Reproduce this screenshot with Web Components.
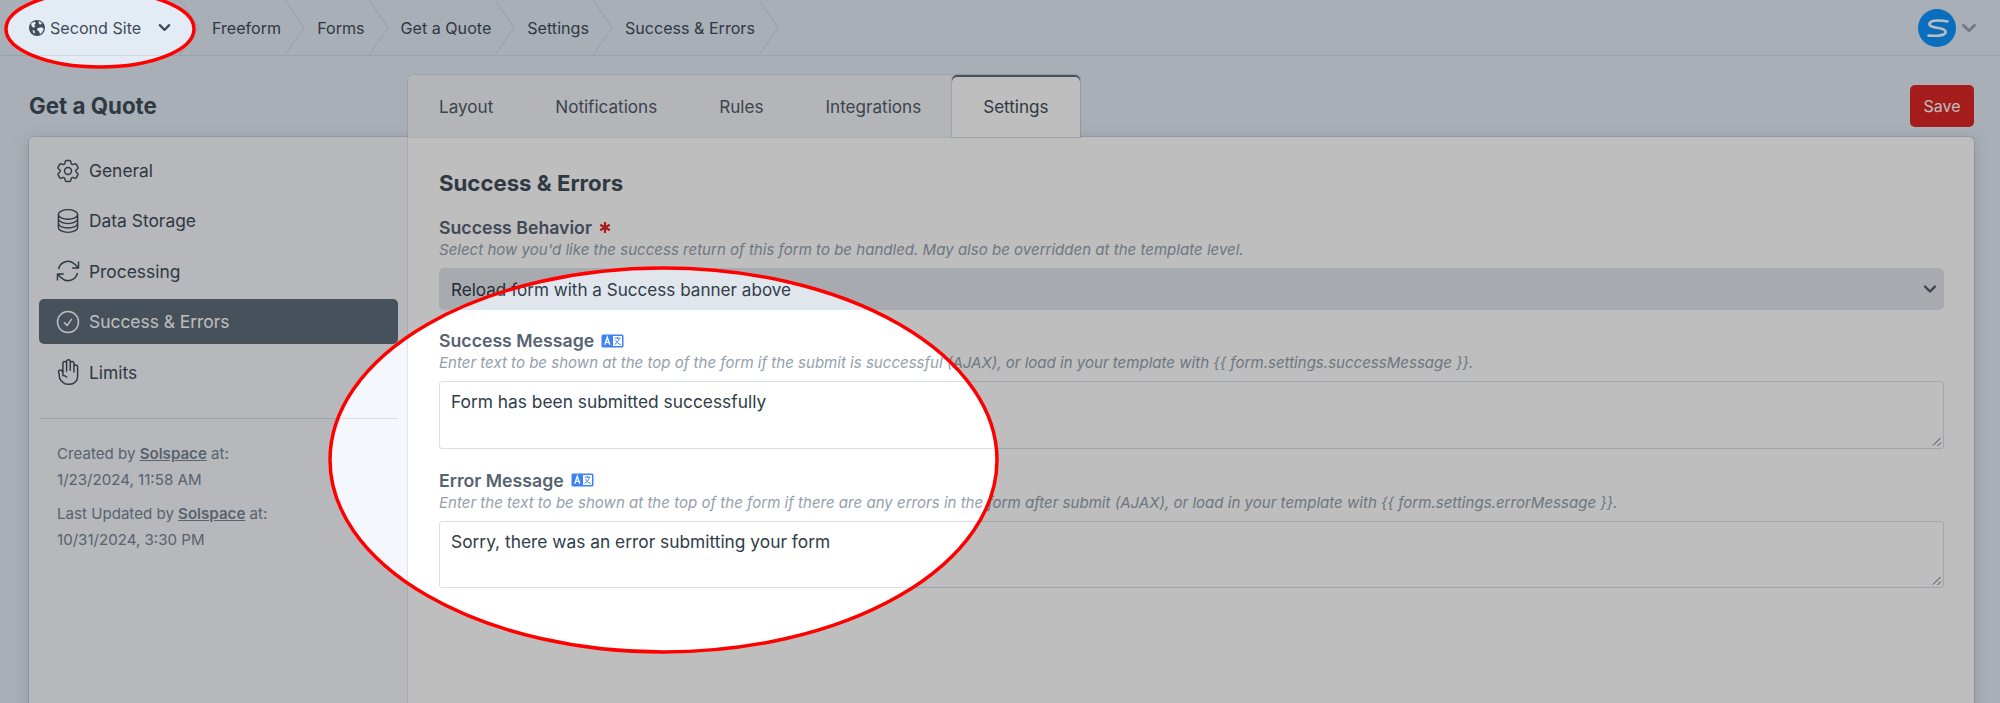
<!DOCTYPE html>
<html lang="en">
<head>
<meta charset="utf-8">
<title>Get a Quote</title>
<style>
  html, body {
    margin: 0;
    height: 703px;
    overflow: hidden;
    background: #e3ebf5;
    font-family: Inter, "Liberation Sans", sans-serif;
    color: #3f4d5a;
  }
</style>
</head>
<body>
<cp-app>
  <cp-header slot="header">
    <cp-crumb site>Second Site</cp-crumb>
    <cp-crumb>Freeform</cp-crumb>
    <cp-crumb>Forms</cp-crumb>
    <cp-crumb>Get a Quote</cp-crumb>
    <cp-crumb>Settings</cp-crumb>
    <cp-crumb>Success &amp; Errors</cp-crumb>
  </cp-header>
  <cp-titlebar slot="titlebar" heading="Get a Quote">
    <cp-tab>Layout</cp-tab>
    <cp-tab>Notifications</cp-tab>
    <cp-tab>Rules</cp-tab>
    <cp-tab>Integrations</cp-tab>
    <cp-tab active>Settings</cp-tab>
  </cp-titlebar>
  <cp-card slot="card">
    <cp-sidebar slot="side">
      <cp-nav-item icon="cog">General</cp-nav-item>
      <cp-nav-item icon="stack">Data Storage</cp-nav-item>
      <cp-nav-item icon="sync">Processing</cp-nav-item>
      <cp-nav-item icon="check" active>Success &amp; Errors</cp-nav-item>
      <cp-nav-item icon="hand">Limits</cp-nav-item>
      <cp-meta slot="meta" action="Created" date="1/23/2024, 11:58 AM"></cp-meta>
      <cp-meta slot="meta" action="Last Updated" date="10/31/2024, 3:30 PM"></cp-meta>
    </cp-sidebar>
    <h2-title>Success &amp; Errors</h2-title>
    <cp-field label="Success Behavior" required kind="select" value="Reload form with a Success banner above">Select how you'd like the success return of this form to be handled. May also be overridden at the template level.</cp-field>
    <cp-field label="Success Message" translatable kind="textarea" value="Form has been submitted successfully">Enter text to be shown at the top of the form if the submit is successful (AJAX), or load in your template with {{ form.settings.successMessage }}.</cp-field>
    <cp-field label="Error Message" translatable kind="textarea" value="Sorry, there was an error submitting your form">Enter the text to be shown at the top of the form if there are any errors in the form after submit (AJAX), or load in your template with {{ form.settings.errorMessage }}.</cp-field>
  </cp-card>
</cp-app>
<cp-spotlight></cp-spotlight>

<script>
const chevron = (size, color) => `
  <svg width="${size}" height="${size}" viewBox="0 0 16 16" fill="none" stroke="${color}" stroke-width="2.4" stroke-linecap="round" stroke-linejoin="round"><path d="M3 5.5 8 10.5 13 5.5"/></svg>`;

const ICONS = {
  cog: `<path d="M9.594 3.94c.09-.542.56-.94 1.11-.94h2.593c.55 0 1.02.398 1.11.94l.213 1.281c.063.374.313.686.645.87.074.04.147.083.22.127.325.196.72.257 1.075.124l1.217-.456a1.125 1.125 0 0 1 1.37.49l1.296 2.247a1.125 1.125 0 0 1-.26 1.431l-1.003.827c-.293.241-.438.613-.43.992a7.723 7.723 0 0 1 0 .255c-.008.378.137.75.43.991l1.004.827c.424.35.534.955.26 1.43l-1.298 2.247a1.125 1.125 0 0 1-1.369.491l-1.217-.456c-.355-.133-.75-.072-1.076.124a6.47 6.47 0 0 1-.22.128c-.331.183-.581.495-.644.869l-.213 1.281c-.09.543-.56.94-1.11.94h-2.594c-.55 0-1.019-.398-1.11-.94l-.213-1.281c-.062-.374-.312-.686-.644-.87a6.52 6.52 0 0 1-.22-.127c-.325-.196-.72-.257-1.076-.124l-1.217.456a1.125 1.125 0 0 1-1.369-.49l-1.297-2.247a1.125 1.125 0 0 1 .26-1.431l1.004-.827c.292-.24.437-.613.43-.991a6.932 6.932 0 0 1 0-.255c.007-.38-.138-.751-.43-.992l-1.004-.827a1.125 1.125 0 0 1-.26-1.43l1.297-2.247a1.125 1.125 0 0 1 1.37-.491l1.216.456c.356.133.751.072 1.076-.124.072-.044.146-.086.22-.128.332-.183.582-.495.644-.869l.214-1.28Z"/><path d="M15 12a3 3 0 1 1-6 0 3 3 0 0 1 6 0Z"/>`,
  stack: `<path d="M20.25 6.375c0 2.278-3.694 4.125-8.25 4.125S3.75 8.653 3.75 6.375m16.5 0c0-2.278-3.694-4.125-8.25-4.125S3.75 4.097 3.75 6.375m16.5 0v11.25c0 2.278-3.694 4.125-8.25 4.125s-8.25-1.847-8.25-4.125V6.375m16.5 0v3.75m-16.5-3.75v3.75m16.5 0v3.75C20.25 16.153 16.556 18 12 18s-8.25-1.847-8.25-4.125v-3.75m16.5 0c0 2.278-3.694 4.125-8.25 4.125s-8.25-1.847-8.25-4.125"/>`,
  sync: `<path d="M16.023 9.348h4.992v-.001M2.985 19.644v-4.992m0 0h4.992m-4.993 0 3.181 3.183a8.25 8.25 0 0 0 13.803-3.7M4.031 9.865a8.25 8.25 0 0 1 13.803-3.7l3.181 3.182m0-4.991v4.99"/>`,
  check: `<path d="M9 12.75 11.25 15 15 9.75M21 12a9 9 0 1 1-18 0 9 9 0 0 1 18 0Z"/>`,
  hand: `<g transform="translate(24 0) scale(-1 1)"><path d="M10.05 4.575a1.575 1.575 0 1 0-3.15 0v3m3.15-3v-1.5a1.575 1.575 0 0 1 3.15 0v1.5m-3.15 0 .075 5.925m3.075.75V4.575m0 0a1.575 1.575 0 0 1 3.15 0V15M6.9 7.575a1.575 1.575 0 1 0-3.15 0v8.175a6.75 6.75 0 0 0 6.75 6.75h2.018a5.25 5.25 0 0 0 3.712-1.538l1.732-1.732a5.25 5.25 0 0 0 1.538-3.712l.003-2.024a.668.668 0 0 1 .198-.471 1.575 1.575 0 1 0-2.228-2.228 3.818 3.818 0 0 0-1.12 2.687M6.9 7.575V12m6.27 4.318A4.49 4.49 0 0 1 16.35 15m.002 0h-.002"/></g>`
};

class CpApp extends HTMLElement {
  constructor() {
    super();
    this.shadow = this.attachShadow({ mode: 'open' });
    this.shadow.innerHTML = `
      <style>
        :host { display: block; height: 703px; overflow: hidden; }
      </style>
      <slot name="header"></slot>
      <slot name="titlebar"></slot>
      <slot name="card"></slot>
    `;
  }
}

class CpHeader extends HTMLElement {
  constructor() {
    super();
    this.shadow = this.attachShadow({ mode: 'open' });
    this.shadow.innerHTML = `
      <style>
        :host {
          display: flex;
          align-items: center;
          height: 55px;
          border-bottom: 1px solid #d3dae4;
          box-sizing: content-box;
          overflow: hidden;
        }
        .user { margin-left: auto; margin-right: 22px; display: flex; align-items: center; gap: 4px; }
      </style>
      <slot></slot>
      <div class="user">
        <svg width="38" height="38" viewBox="0 0 38 38">
          <circle cx="19" cy="19" r="19" fill="#0e94ff"/>
          <path d="M29.5 12.5C24 11.3 14 10.6 11.7 14 10 17 15 18.4 20 19 25 19.6 28.2 21 27.6 23.6 27 26 20 27.2 10.5 26.6" fill="none" stroke="#fff" stroke-width="2.6" stroke-linecap="round"/>
        </svg>
        ${chevron(18, '#9aa3ad')}
      </div>
    `;
  }
}

class CpCrumb extends HTMLElement {
  constructor() {
    super();
    this.shadow = this.attachShadow({ mode: 'open' });
    const site = this.hasAttribute('site');
    this.shadow.innerHTML = `
      <style>
        :host {
          display: flex;
          align-items: center;
          position: relative;
          height: 55px;
          font-size: 16.1px;
          color: #3f4d5a;
          white-space: nowrap;
          padding: 0 4px 0 32px;
        }
        :host([site]) { padding: 0 0 0 29px; width: 151px; gap: 5px; }
        .sep { position: absolute; left: 100%; top: 0; }
        .down { margin-left: 11px; display: flex; }
        .globe { display: block; flex: none; }
      </style>
      ${site ? `<svg class="globe" width="16" height="16" viewBox="0 0 16 16">
        <circle cx="8" cy="8" r="8" fill="#3f4d5a"/>
        <path d="M2 3.4 5.6 1.6 6.8 3.4 5.2 5 6.4 6.4 4.4 7.8 2.6 6ZM9.4 1 13 3 12 4.6 10.2 4.2ZM8.6 8 12.6 7.2 14.8 8.8 13 12.4 11 14.2 10.2 11.4 8.2 10.2ZM3.4 10 5.4 10.4 6 13 4.8 13.4Z" fill="#e8eef7"/>
      </svg>` : ''}
      <span><slot></slot></span>
      ${site ? `<span class="down">${chevron(15, '#3f4d5a')}</span>` : ''}
      <svg class="sep" width="20" height="55" viewBox="0 0 20 55" fill="none" stroke="#cdd5df" stroke-width="1"><path d="M0 0 19 27.5 0 55"/></svg>
    `;
  }
}

class CpTitlebar extends HTMLElement {
  constructor() {
    super();
    this.shadow = this.attachShadow({ mode: 'open' });
    this.shadow.innerHTML = `
      <style>
        :host {
          display: flex;
          height: 81px;
          padding: 0 26px 0 29px;
        }
        h1 {
          margin: 0;
          width: 379px;
          flex: none;
          padding-top: 34px;
          font-size: 22.3px;
          line-height: 32px;
          font-weight: 700;
          color: #3f4d5a;
          box-sizing: border-box;
        }
        nav {
          display: flex;
          align-self: flex-end;
          height: 62px;
          background: #f0f3f7;
          border-radius: 5px 5px 0 0;
          box-shadow: 0 0 0 1px rgba(155,170,190,.25);
        }
        button {
          margin: 29px 0 0 auto;
          width: 64px;
          height: 42px;
          border: 0;
          border-radius: 5px;
          background: #dc2626;
          color: #fff;
          font: 16px Inter, "Liberation Sans", sans-serif;
          box-shadow: 0 0 0 1px #e6edf5;
        }
      </style>
      <h1>${this.getAttribute('heading')}</h1>
      <nav><slot></slot></nav>
      <button>Save</button>
    `;
  }
}

class CpTab extends HTMLElement {
  constructor() {
    super();
    this.shadow = this.attachShadow({ mode: 'open' });
    this.shadow.innerHTML = `
      <style>
        :host {
          display: flex;
          align-items: center;
          padding: 0 31px;
          font-size: 17.1px;
          color: #4f5c6b;
          white-space: nowrap;
        }
        :host([active]) {
          background: #fff;
          color: #3f4d5a;
          border-radius: 5px 5px 0 0;
          box-shadow: inset 0 2px 0 #606d7b, 0 0 0 1px rgba(155,170,190,.3);
        }
      </style>
      <slot></slot>
    `;
  }
}

class CpCard extends HTMLElement {
  constructor() {
    super();
    this.shadow = this.attachShadow({ mode: 'open' });
    this.shadow.innerHTML = `
      <style>
        :host {
          display: flex;
          margin: 0 26px 0 29px;
          height: 640px;
          background: #fff;
          border-radius: 5px 5px 0 0;
          box-shadow: 0 0 0 1px rgba(155,170,190,.35), 0 2px 14px rgba(155,170,190,.5);
        }
        main { flex: 1; padding: 31px 30px 0 31px; min-width: 0; }
      </style>
      <slot name="side"></slot>
      <main><slot></slot></main>
    `;
  }
}

class CpSidebar extends HTMLElement {
  constructor() {
    super();
    this.shadow = this.attachShadow({ mode: 'open' });
    this.shadow.innerHTML = `
      <style>
        :host {
          display: block;
          flex: none;
          width: 379px;
          box-sizing: border-box;
          padding: 11px 9px 0 10px;
          background: #f4f7fc;
          border-right: 1px solid #dfe5ee;
          border-radius: 5px 0 0 0;
        }
        nav { display: flex; flex-direction: column; gap: 5.4px; }
        hr { margin: 23px 0 0; border: 0; border-top: 1px solid #d5dde8; }
        .meta { padding: 22px 18px 0; display: flex; flex-direction: column; gap: 8px; }
      </style>
      <nav><slot></slot></nav>
      <hr>
      <div class="meta"><slot name="meta"></slot></div>
    `;
  }
}

class CpNavItem extends HTMLElement {
  constructor() {
    super();
    this.shadow = this.attachShadow({ mode: 'open' });
    this.shadow.innerHTML = `
      <style>
        :host {
          display: flex;
          align-items: center;
          gap: 7px;
          height: 45px;
          padding-left: 15px;
          border-radius: 5px;
          font-size: 17.4px;
          color: #3f4d5a;
        }
        :host([active]) { background: #606d7b; color: #fff; }
        svg { flex: none; }
      </style>
      <svg width="28" height="28" viewBox="0 0 24 24" fill="none" stroke="currentColor" stroke-width="1.25" stroke-linecap="round" stroke-linejoin="round">${ICONS[this.getAttribute('icon')]}</svg>
      <span><slot></slot></span>
    `;
  }
}

class CpMeta extends HTMLElement {
  constructor() {
    super();
    this.shadow = this.attachShadow({ mode: 'open' });
    this.shadow.innerHTML = `
      <style>
        :host { display: block; font-size: 15.1px; line-height: 26px; color: #788494; }
        a { color: inherit; font-weight: 600; text-decoration: underline; }
      </style>
      <div>${this.getAttribute('action')} by <a>Solspace</a> at:</div>
      <div>${this.getAttribute('date')}</div>
    `;
  }
}

class H2Title extends HTMLElement {
  constructor() {
    super();
    this.shadow = this.attachShadow({ mode: 'open' });
    this.shadow.innerHTML = `
      <style>
        :host { display: block; font-size: 22.2px; line-height: 30px; font-weight: 700; color: #3f4d5a; margin-bottom: 18.5px; }
      </style>
      <slot></slot>
    `;
  }
}

class CpField extends HTMLElement {
  constructor() {
    super();
    this.shadow = this.attachShadow({ mode: 'open' });
    const kind = this.getAttribute('kind');
    const value = this.getAttribute('value');
    const badge = `<svg class="badge" width="23" height="14" viewBox="0 0 23 14">
        <rect x=".5" y=".5" width="22" height="13" rx="1.5" fill="#3b82f6"/>
        <rect x="12" y="2" width="9" height="10" fill="#fff"/>
        <path d="M3.8 10.8 6.3 3.2 8.8 10.8M4.7 8.4H7.9" fill="none" stroke="#fff" stroke-width="1.3"/>
        <path d="M13.6 4.2H19.4M16.5 3V4.2M18.4 4.4C17.6 7.4 15.6 9.4 13.6 10.4M14.6 6C15.4 8 17.2 9.8 19.6 10.6" fill="none" stroke="#3b82f6" stroke-width="1"/>
      </svg>`;
    this.shadow.innerHTML = `
      <style>
        :host { display: block; margin-bottom: 20.5px; }
        :host([kind=select]) { margin-bottom: 19.5px; }
        .label { display: flex; align-items: center; gap: 7px; height: 22px; font-size: 17.7px; font-weight: 600; color: #566372; }
        .req { display: block; flex: none; }
        .desc { margin-top: 1.5px; height: 20px; font-size: 15.05px; line-height: 20px; font-style: italic; color: #93a0ae; white-space: nowrap; }
        .select {
          display: flex; align-items: center; justify-content: space-between;
          margin-top: 8px; height: 42px; padding: 0 6px 0 12px;
          box-sizing: border-box; border-radius: 5px;
          background: #e0e6ec; font-size: 17.1px; color: #2f3d4a;
        }
        .textarea {
          position: relative;
          margin-top: 8px; height: 67.5px; padding: 10px 11px;
          box-sizing: border-box; border-radius: 3px;
          background: #fff; border: 1px solid #d9dfea;
          font-size: 17.35px; line-height: 20px; color: #2f3d4a;
        }
        .grip { position: absolute; right: 1px; bottom: 1px; }
      </style>
      <div class="label">
        <span>${this.getAttribute('label')}</span>
        ${this.hasAttribute('required') ? `<svg class="req" width="12" height="13" viewBox="0 0 12 13" fill="none" stroke="#dc2626" stroke-width="2.2"><path d="M6 1V12M1.2 3.75 10.8 9.25M10.8 3.75 1.2 9.25"/></svg>` : ''}
        ${this.hasAttribute('translatable') ? badge : ''}
      </div>
      <div class="desc"><slot></slot></div>
      ${kind == 'select'
        ? `<div class="select"><span>${value}</span>${chevron(16, '#4f5c6b')}</div>`
        : `<div class="textarea">${value}
            <svg class="grip" width="12" height="12" viewBox="0 0 12 12" fill="none" stroke="#5c6670" stroke-width="1"><path d="M10.5 3 3 10.5M11 7.5 7.5 11"/></svg>
          </div>`}
    `;
  }
}

// dims the whole page, with the two called out areas left bright
class CpSpotlight extends HTMLElement {
  constructor() {
    super();
    this.shadow = this.attachShadow({ mode: 'open' });
    const ell = (cx, cy, rx, ry) => `M${cx - rx} ${cy}a${rx} ${ry} 0 1 0 ${rx * 2} 0a${rx} ${ry} 0 1 0 ${-rx * 2} 0Z`;
    const holes = ell(100, 29, 94, 38) + ell(663.5, 460, 333.5, 192);
    this.shadow.innerHTML = `
      <style>
        :host { display: block; position: fixed; left: 0; top: 0; width: 2000px; height: 703px; pointer-events: none; }
        svg { display: block; }
      </style>
      <svg width="2000" height="703" viewBox="0 0 2000 703">
        <path d="M0 0H2000V703H0Z${holes}" fill="#000" fill-opacity=".255" fill-rule="evenodd"/>
        <path d="${holes}" fill="none" stroke="#f00" stroke-width="3.5"/>
      </svg>
    `;
  }
}

customElements.define('cp-app', CpApp);
customElements.define('cp-header', CpHeader);
customElements.define('cp-crumb', CpCrumb);
customElements.define('cp-titlebar', CpTitlebar);
customElements.define('cp-tab', CpTab);
customElements.define('cp-card', CpCard);
customElements.define('cp-sidebar', CpSidebar);
customElements.define('cp-nav-item', CpNavItem);
customElements.define('cp-meta', CpMeta);
customElements.define('h2-title', H2Title);
customElements.define('cp-field', CpField);
customElements.define('cp-spotlight', CpSpotlight);
</script>
</body>
</html>
